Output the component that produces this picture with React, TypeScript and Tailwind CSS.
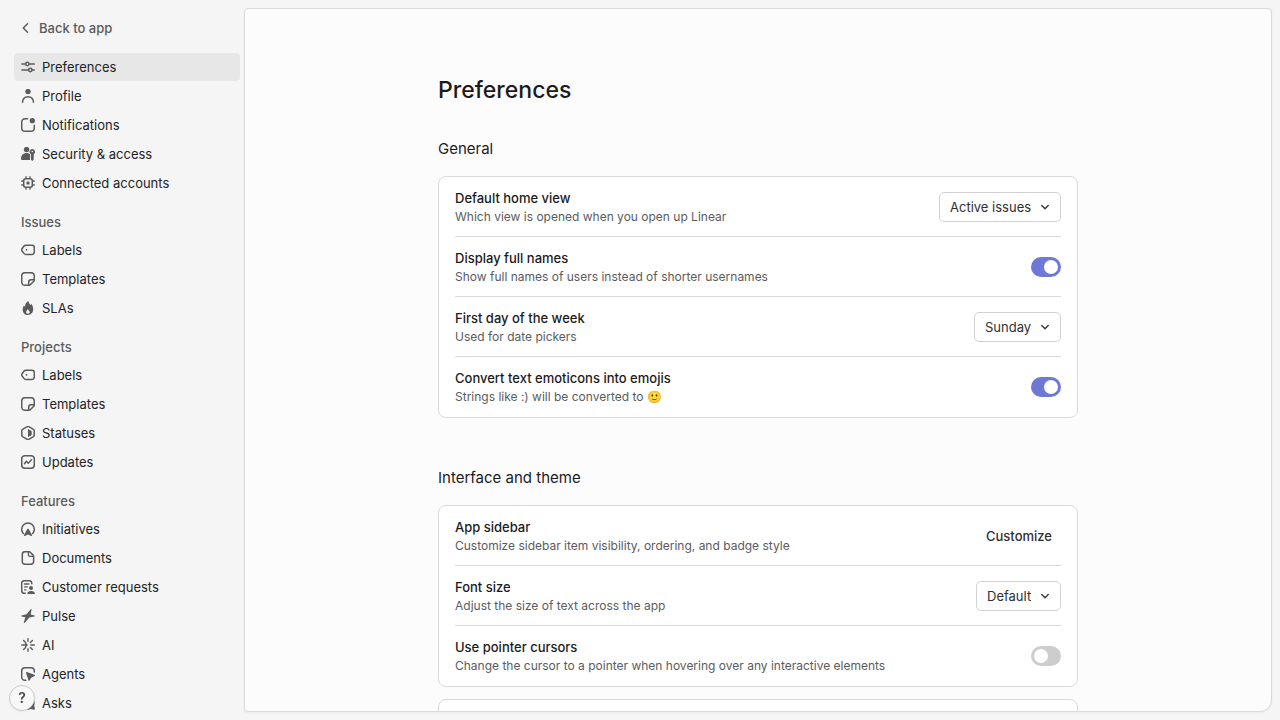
import React, { useState } from "react";

function Icon({ children }: { children: React.ReactNode }) {
  return (
    <svg
      viewBox="0 0 14 14"
      className="size-3.5 shrink-0 text-[#5b5b5d]"
      fill="none"
      stroke="currentColor"
      strokeWidth="1.5"
      strokeLinecap="round"
      strokeLinejoin="round"
      aria-hidden="true"
    >
      {children}
    </svg>
  );
}

const solid = { fill: "currentColor", stroke: "none" };

const icons = {
  sliders: (
    <Icon>
      <path d="M.9 4h3.500M8.200 4h5.100M.9 10h6.500M11.200 10h2.100" />
      <circle cx="6.300" cy="4" r="1.700" />
      <circle cx="9.300" cy="10" r="1.700" />
    </Icon>
  ),
  profile: (
    <Icon>
      <circle cx="7" cy="2.600" r="2.700" {...solid} />
      <path d="M1.500 13.200C1.800 9.900 4 7.700 7 7.700s5.200 2.200 5.500 5.500" />
    </Icon>
  ),
  notifications: (
    <Icon>
      <path d="M6.500.8H4C2 .8.700 2.100.7 4.100v5.800c0 2 1.300 3.300 3.300 3.300h6c2 0 3.300-1.300 3.300-3.300V7.300" />
      <circle cx="11.300" cy="2.700" r="2.600" {...solid} />
    </Icon>
  ),
  security: (
    <Icon>
      <circle cx="5.600" cy="2.600" r="2.700" {...solid} />
      <path d="M5.400 6c1.300 0 2.600.4 3.600 1.200V13H1.400C.5 13 0 12.500 0 11.500 0 8.400 2.300 6 5.400 6Z" {...solid} />
      <path
        fillRule="evenodd"
        d="M11.300 2.100a2.800 2.800 0 0 1 1.400 5.200v5.200l-1.400 1.500L9.900 12.500V7.300a2.800 2.800 0 0 1 1.400-5.200Zm0 1.600a.8.8 0 1 0 0 1.600.8.8 0 0 0 0-1.600Z"
        {...solid}
      />
    </Icon>
  ),
  chip: (
    <Icon>
      <rect x="2.700" y="2.700" width="8.600" height="8.600" rx="2" />
      <rect x="5.500" y="5.500" width="3" height="3" rx=".6" {...solid} />
      <path d="M5 .7v2M9 .7v2M5 11.300v2M9 11.300v2M.7 5h2M.7 9h2M11.300 5h2M11.300 9h2" strokeWidth="1.300" />
    </Icon>
  ),
  label: (
    <Icon>
      <path d="M4.800 2.200h6.200c1.400 0 2.300.9 2.300 2.300v4.600c0 1.400-.9 2.300-2.300 2.300H4.800c-.7 0-1.300-.3-1.700-.8L1.100 8c-.5-.7-.5-1.600 0-2.300l2-2.700c.4-.5 1-.8 1.700-.8Z" />
      <circle cx="5.500" cy="6.800" r=".9" {...solid} />
    </Icon>
  ),
  template: (
    <Icon>
      <path d="M13.300 8V4c0-2-1.300-3.300-3.300-3.300H4C2 .7.700 2 .7 4v6c0 2 1.300 3.300 3.300 3.300h4c.5 0 .9-.2 1.200-.5l3.600-3.600c.3-.3.5-.7.5-1.200Z" />
      <path d="M13.200 7.700H10c-1.400 0-2.300.9-2.300 2.300v3.200" />
    </Icon>
  ),
  flame: (
    <Icon>
      <path
        fillRule="evenodd"
        d="M7.200 0c.5 2 1.500 2.900 2.100 4.300.4-.4.600-.9.700-1.500 1.300 1.300 2.200 3.200 2.200 5.300 0 3.600-2.200 5.900-5.300 5.900S1.700 11.600 1.700 8.400c0-1.700.6-3 1.300-4 .2.600.4 1 .9 1.300C4.100 3.100 5.400 1.300 7.200 0ZM6.800 8c-.3 1.100-1.700 1.600-1.700 3.100 0 1 .7 1.700 1.800 1.700s1.800-.7 1.800-1.800c0-1.300-1.600-1.800-1.900-3Z"
        {...solid}
      />
    </Icon>
  ),
  status: (
    <Icon>
      <path d="M6.200.7c.5-.3 1.100-.3 1.600 0l4.600 2.600c.5.300.8.800.8 1.400v4.600c0 .6-.3 1.100-.8 1.400l-4.600 2.600c-.5.300-1.100.3-1.600 0l-4.600-2.600c-.5-.3-.8-.8-.8-1.400V4.700c0-.6.3-1.100.8-1.400Z" />
      <path d="M7 3.100c.2 0 .4.100.6.200l2.600 1.500c.3.200.5.500.5.900v2.600c0 .4-.2.700-.5.900l-2.600 1.500c-.2.100-.4.200-.6.200Z" {...solid} />
    </Icon>
  ),
  updates: (
    <Icon>
      <rect x=".7" y=".7" width="12.600" height="12.600" rx="3.200" />
      <path d="m3.400 8.800 2-2.500 1.900 1.900 3.200-3.400" strokeWidth="1.400" />
    </Icon>
  ),
  initiatives: (
    <Icon>
      <path d="M2.300 11.500A6.300 6.300 0 1 1 11.700 11.500" />
      <path d="M6.300 7.100c.3-.6 1.100-.6 1.400 0l3.300 6c.3.500-.3 1.100-.8.800L7 12.600l-3.200 1.300c-.5.300-1.100-.3-.8-.8Z" {...solid} />
    </Icon>
  ),
  document: (
    <Icon>
      <path d="M4 .7h3.900c.5 0 1 .2 1.300.5l2.900 2.900c.3.300.5.800.5 1.300v5.200c0 1.700-1 2.700-2.700 2.700H4c-1.700 0-2.700-1-2.700-2.700V3.400C1.300 1.700 2.300.7 4 .7Z" />
      <path d="M7.400 1v2.700c0 1.100.6 1.700 1.700 1.700h3.100" strokeWidth="1.300" />
    </Icon>
  ),
  customer: (
    <Icon>
      <path d="M10.800 3.800v-.6c0-1.500-1-2.500-2.500-2.500H3.200C1.700.7.700 1.700.7 3.200v7.600c0 1.500 1 2.500 2.500 2.500h.9" />
      <path d="M3.600 4h4.300M3.600 6.900h2.600M3.600 9.800h1.500" strokeWidth="1.300" />
      <circle cx="10" cy="8" r="2" {...solid} />
      <path d="M6.200 14c0-1.900 1.500-3 3.900-3s3.900 1.100 3.900 3Z" {...solid} />
    </Icon>
  ),
  pulse: (
    <Icon>
      <path
        d="M10.500.4c.3-.6 0-.8-.6-.3L5.600 5.200.6 6.400c-.8.200-.8.900 0 1l3.700.8-1.500 5.300c-.1.700.4.800.8.400l4.800-5.300 5-1.200c.8-.2.8-.8 0-1L9.700 5.600Z"
        {...solid}
      />
    </Icon>
  ),
  ai: (
    <Icon>
      <path d="M7 .8v2.500M7 10.700v2.500M9.800 7h3.500M2.600 2.600l2 2M11.400 2.600l-2 2M2.600 11.400l2-2M11.400 11.400l-2-2M.8 7h4.600M4.600 5.400 6 7 4.600 8.600" strokeWidth="1.400" />
    </Icon>
  ),
  agents: (
    <Icon>
      <path d="M13.300 5V4c0-2-1.300-3.300-3.300-3.300H4C2 .7.700 2 .7 4v6c0 2 1.300 3.300 3.300 3.300h.8" />
      <path d="M5.700 5c-.5-.2-.9.200-.7.700l2.500 7.800c.2.600.8.600 1.100.1l1.600-2.800 3.400-1.900c.6-.3.500-.9-.1-1.100Z" {...solid} />
    </Icon>
  ),
  asks: (
    <Icon>
      <path d="M7 .2a6.700 6.700 0 0 1 6.200 9.200l.7 3.500c.1.500-.3.900-.8.800l-3.500-.7A6.700 6.700 0 1 1 7 .2Z" {...solid} />
    </Icon>
  ),
};

type Item = { name: string; icon: React.ReactNode; active?: boolean };

const groups: { title?: string; items: Item[] }[] = [
  {
    items: [
      { name: "Preferences", icon: icons.sliders, active: true },
      { name: "Profile", icon: icons.profile },
      { name: "Notifications", icon: icons.notifications },
      { name: "Security & access", icon: icons.security },
      { name: "Connected accounts", icon: icons.chip },
    ],
  },
  {
    title: "Issues",
    items: [
      { name: "Labels", icon: icons.label },
      { name: "Templates", icon: icons.template },
      { name: "SLAs", icon: icons.flame },
    ],
  },
  {
    title: "Projects",
    items: [
      { name: "Labels", icon: icons.label },
      { name: "Templates", icon: icons.template },
      { name: "Statuses", icon: icons.status },
      { name: "Updates", icon: icons.updates },
    ],
  },
  {
    title: "Features",
    items: [
      { name: "Initiatives", icon: icons.initiatives },
      { name: "Documents", icon: icons.document },
      { name: "Customer requests", icon: icons.customer },
      { name: "Pulse", icon: icons.pulse },
      { name: "AI", icon: icons.ai },
      { name: "Agents", icon: icons.agents },
      { name: "Asks", icon: icons.asks },
    ],
  },
];

function Sidebar() {
  return (
    <aside className="w-61 shrink-0 overflow-hidden pt-3.5 pr-1 pl-3.5">
      <a href="#back" className="flex h-7 items-center gap-2 px-[7px] font-medium text-[#5b5b5d]">
        <svg
          viewBox="0 0 10 14"
          className="h-3.5 w-2.5"
          fill="none"
          stroke="currentColor"
          strokeWidth="1.5"
          strokeLinecap="round"
          strokeLinejoin="round"
          aria-hidden="true"
        >
          <path d="M6.500 2.800 2.300 7l4.200 4.200" />
        </svg>
        Back to app
      </a>
      <nav aria-label="Settings" className="mt-[11px]">
        {groups.map((group, i) => (
          <section key={i}>
            {group.title && (
              <h2 className="flex h-[39px] items-end px-[7px] pb-1 font-medium text-[#5b5b5d]">{group.title}</h2>
            )}
            <ul className="flex flex-col gap-px">
              {group.items.map((item) => (
                <li key={item.name}>
                  <a
                    href="#settings"
                    aria-current={item.active ? "page" : undefined}
                    className="flex h-7 items-center gap-[7px] rounded px-[7px] text-[#232325] aria-[current=page]:bg-[#e7e7e7]"
                  >
                    {item.icon}
                    {item.name}
                  </a>
                </li>
              ))}
            </ul>
          </section>
        ))}
      </nav>
    </aside>
  );
}

function Row({
  id,
  title,
  description,
  children,
}: {
  id: string;
  title: string;
  description: React.ReactNode;
  children: React.ReactNode;
}) {
  return (
    <div className="flex h-15 items-center justify-between border-b border-[#dadada] last:border-b-0">
      <div>
        <label htmlFor={id} className="block font-medium text-[#1b1b1c]">
          {title}
        </label>
        <p className="text-xs leading-[18px] text-[#5b5b5d]">{description}</p>
      </div>
      {children}
    </div>
  );
}

function Select({ id, value }: { id: string; value: string }) {
  return (
    <div className="relative">
      <select
        id={id}
        className="block h-[30px] appearance-none rounded-[5px] border border-[#d2d2d2] bg-white pr-7 pl-2.5 text-[#2f2f31]"
      >
        <option>{value}</option>
      </select>
      <svg
        viewBox="0 0 10 10"
        className="pointer-events-none absolute top-2.5 right-[11px] size-2.5 text-[#3f3f41]"
        fill="none"
        stroke="currentColor"
        strokeWidth="1.5"
        strokeLinecap="round"
        strokeLinejoin="round"
        aria-hidden="true"
      >
        <path d="m1.800 3.500 3.200 3.200 3.200-3.200" />
      </svg>
    </div>
  );
}

function Toggle({ id, initial = false }: { id: string; initial?: boolean }) {
  const [on, setOn] = useState(initial);
  return (
    <input
      id={id}
      type="checkbox"
      role="switch"
      checked={on}
      onChange={() => setOn(!on)}
      className="flex h-5 w-[30px] appearance-none items-center rounded-full bg-[#cdcdcd] px-[3px] before:size-3.5 before:rounded-full before:bg-white checked:justify-end checked:bg-[#6e79d6]"
    />
  );
}

function Card({ children }: { children: React.ReactNode }) {
  return <div className="rounded-lg border border-[#dadada] bg-white px-4">{children}</div>;
}

function Section({ title, children }: { title: string; children: React.ReactNode }) {
  return (
    <section className="mb-12">
      <h2 className="text-[15px] leading-6 text-[#1b1b1c]">{title}</h2>
      <div className="mt-[15px] flex flex-col gap-3">{children}</div>
    </section>
  );
}

export default function App() {
  return (
    <div className="flex h-screen overflow-hidden bg-[#f5f5f5] font-['Inter','Liberation_Sans',sans-serif] text-[13px] leading-5 font-normal">
      <Sidebar />
      <main className="mt-2 mr-2 mb-2 min-w-0 flex-1 overflow-hidden rounded rounded-br-xl border border-[#dadada] bg-[#fcfcfc] shadow-xs">
        <div className="mx-auto w-full max-w-160 pt-[65px]">
          <h1 className="mb-[31px] text-[23px] leading-8 font-medium text-[#1b1b1c]">Preferences</h1>
          <Section title="General">
            <Card>
              <Row id="home" title="Default home view" description="Which view is opened when you open up Linear">
                <Select id="home" value="Active issues" />
              </Row>
              <Row id="names" title="Display full names" description="Show full names of users instead of shorter usernames">
                <Toggle id="names" initial />
              </Row>
              <Row id="week" title="First day of the week" description="Used for date pickers">
                <Select id="week" value="Sunday" />
              </Row>
              <Row id="emoji" title="Convert text emoticons into emojis" description="Strings like :) will be converted to 🙂">
                <Toggle id="emoji" initial />
              </Row>
            </Card>
          </Section>
          <Section title="Interface and theme">
            <Card>
              <Row id="sidebar" title="App sidebar" description="Customize sidebar item visibility, ordering, and badge style">
                <button id="sidebar" type="button" className="h-7 px-[9px] font-medium text-[#2f2f31]">
                  Customize
                </button>
              </Row>
              <Row id="font" title="Font size" description="Adjust the size of text across the app">
                <Select id="font" value="Default" />
              </Row>
              <Row
                id="cursor"
                title="Use pointer cursors"
                description="Change the cursor to a pointer when hovering over any interactive elements"
              >
                <Toggle id="cursor" />
              </Row>
            </Card>
            <Card>
              <div className="h-15" />
            </Card>
          </Section>
        </div>
      </main>
      <button
        type="button"
        aria-label="Help"
        className="fixed bottom-[9px] left-[9px] flex size-[26px] items-center justify-center rounded-full border border-[#c8c8c8] bg-[#f8f8f8] text-sm font-semibold text-[#4a4a4c] shadow-xs"
      >
        ?
      </button>
    </div>
  );
}
